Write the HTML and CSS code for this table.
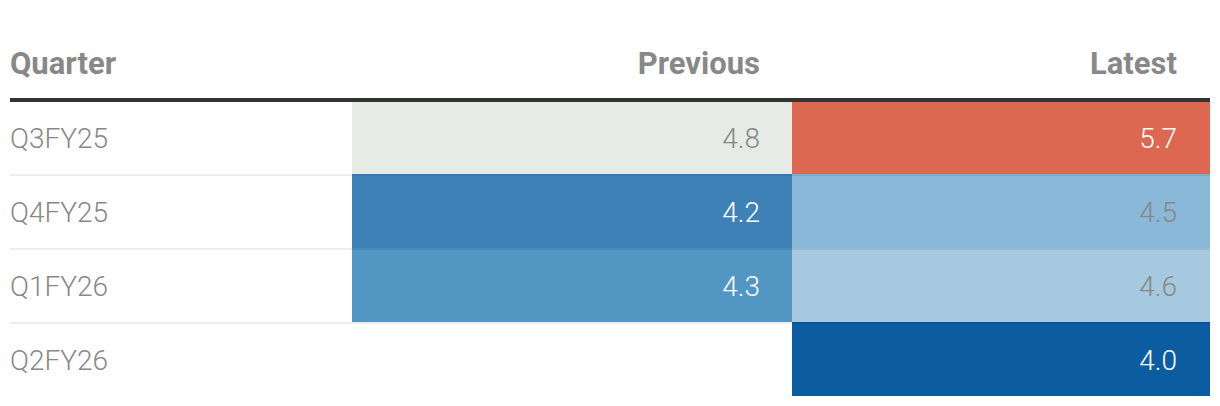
FILE: index.html
```html
<!DOCTYPE html>
<html lang="en">
<head>
<meta charset="utf-8">
<title>Quarter table</title>
<link rel="stylesheet" href="styles.css">
</head>
<body>
<div class="table">
  <div class="row head">
    <div class="cell label">Quarter</div>
    <div class="cell num">Previous</div>
    <div class="cell num">Latest</div>
  </div>
  <div class="row first">
    <div class="cell label">Q3FY25</div>
    <div class="cell num c-48">4.8</div>
    <div class="cell num c-57 light">5.7</div>
  </div>
  <div class="row">
    <div class="cell label">Q4FY25</div>
    <div class="cell num c-42 light">4.2</div>
    <div class="cell num c-45">4.5</div>
  </div>
  <div class="row">
    <div class="cell label">Q1FY26</div>
    <div class="cell num c-43 light">4.3</div>
    <div class="cell num c-46">4.6</div>
  </div>
  <div class="row">
    <div class="cell label">Q2FY26</div>
    <div class="cell num"></div>
    <div class="cell num c-40 light">4.0</div>
  </div>
</div>
</body>
</html>
```

FILE: styles.css
```css
html, body {
  margin: 0;
  padding: 0;
  background: #ffffff;
}

body {
  font-family: Roboto, "Liberation Sans", sans-serif;
}

.table {
  width: 1200px;
  margin: 0 10px;
}

.row {
  display: grid;
  grid-template-columns: 342px 440px 418px;
}

.row .cell {
  display: flex;
  align-items: center;
  height: 74px;
  box-sizing: border-box;
  border-top: 2px solid rgba(0, 0, 0, 0.075);
  font-size: 28px;
  font-weight: 300;
  color: #888888;
}

.row.first .cell {
  height: 72px;
  border-top: none;
}

.cell.num {
  justify-content: flex-end;
  padding-right: 32px;
}

.row .cell:last-child {
  padding-right: 33px;
}

.cell.label {
  padding-left: 0;
}

.row.head {
  border-bottom: 4px solid #333333;
}

.row.head .cell {
  height: auto;
  border-top: none;
  padding-top: 48px;
  padding-bottom: 19px;
  font-size: 31px;
  line-height: 31px;
  font-weight: 700;
  color: #888888;
  align-items: flex-end;
}

.cell.light {
  color: #ffffff;
}

.c-48 { background: #e6ebe6; }
.c-57 { background: #dd6852; }
.c-42 { background: #3e81b7; }
.c-45 { background: #89b8d9; }
.c-43 { background: #5296c4; }
.c-46 { background: #a5c9df; }
.c-40 { background: #0b5ca1; }
```
